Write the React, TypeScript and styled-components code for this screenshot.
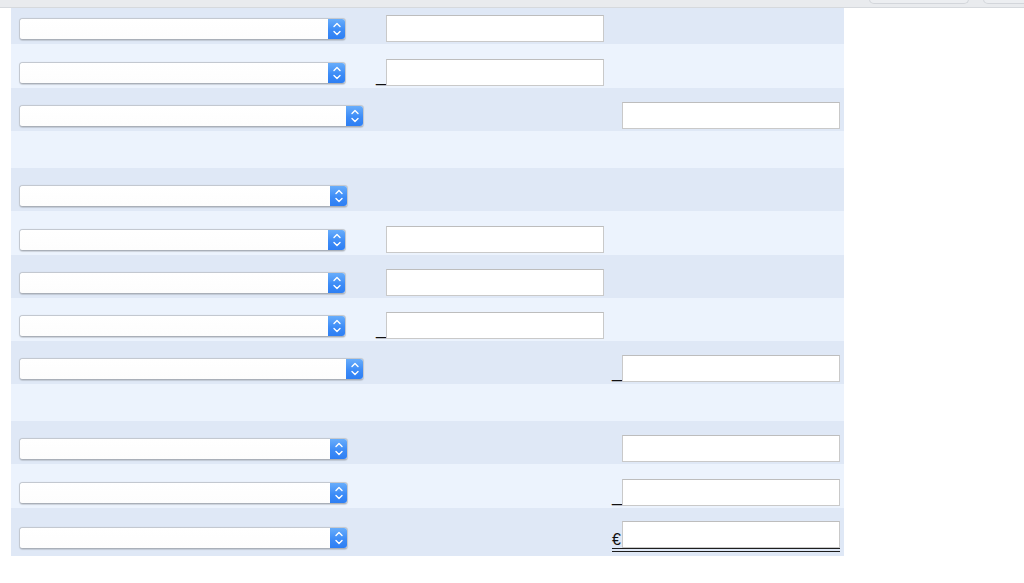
import React from "react";
import styled, { createGlobalStyle } from "styled-components";

const Global = createGlobalStyle`
  html, body { margin: 0; padding: 0; background: #ffffff; }
  body { font-family: "Liberation Sans", Arial, sans-serif; width: 1024px; height: 583px; overflow: hidden; }
`;

const Toolbar = styled.div`
  height: 7px;
  background: #e9ebee;
  border-bottom: 1px solid #d6d9dd;
  display: flex;
  gap: 14px;
  padding-left: 869px;
  overflow: hidden;
`;

const ToolButton = styled.div<{ $w: number }>`
  flex: 0 0 ${(p) => p.$w}px;
  height: 4px;
  margin-top: -1px;
  border: 1px solid #d3d6db;
  border-top: none;
  border-radius: 0 0 5px 5px;
  background: #eceef1;
`;

const Sheet = styled.div`
  margin-left: 11px;
  width: 833px;
  display: flex;
  flex-direction: column;
`;

const Row = styled.div<{ $h: number; $dark: boolean; $pb: number }>`
  height: ${(p) => p.$h}px;
  box-sizing: border-box;
  background: ${(p) => (p.$dark ? "#dfe8f6" : "#ecf3fd")};
  display: grid;
  grid-template-columns: 357px 236px 232px;
  padding-left: 8px;
  padding-bottom: ${(p) => p.$pb}px;
  align-items: end;
`;

const SelectBox = styled.div<{ $w: number; $mb: number }>`
  width: ${(p) => p.$w}px;
  height: 22px;
  box-sizing: border-box;
  margin-bottom: ${(p) => p.$mb}px;
  display: flex;
  border-radius: 4px;
  background: #ffffff;
  border: 1px solid #c3c8d0;
  border-bottom-color: #a9afb8;
  box-shadow: 0 0.5px 1px rgba(0, 0, 0, 0.14);
  overflow: hidden;
`;

const SelectField = styled.div`
  flex: 1;
  background: linear-gradient(#ffffff, #fdfdfd);
`;

const Stepper = styled.div`
  flex: 0 0 18px;
  margin: -1px -1px -1px 0;
  border-radius: 0 4px 4px 0;
  background: linear-gradient(#6cb0fb, #3d8cf7 55%, #2c7df3);
  display: flex;
  align-items: center;
  justify-content: center;
`;

const FieldCell = styled.div<{ $total?: boolean }>`
  display: flex;
  align-items: flex-end;
  width: 228px;
  ${(p) => (p.$total ? "border-bottom: 4px double #1e1e1e; padding-bottom: 0.5px;" : "")}
`;

const Mark = styled.span<{ $euro?: boolean }>`
  flex: 0 0 10px;
  width: 10px;
  height: 18px;
  line-height: 18px;
  font-size: ${(p) => (p.$euro ? "16px" : "18px")};
  color: #111;
  margin-bottom: ${(p) => (p.$euro ? -1 : 2)}px;
  overflow: visible;
  white-space: nowrap;
`;

const Input = styled.div`
  width: 218px;
  height: 27px;
  box-sizing: border-box;
  background: #ffffff;
  border: 1px solid #c9c9c9;
  border-top-color: #bdbdbd;
`;

const Chevrons = () => (
  <svg width="18" height="20" viewBox="0 0 18 20">
    <polyline
      points="6,7.5 9,4.5 12,7.5"
      fill="none"
      stroke="#ffffff"
      strokeWidth="1.4"
      strokeLinecap="round"
      strokeLinejoin="round"
    />
    <polyline
      points="6,12.5 9,15.5 12,12.5"
      fill="none"
      stroke="#ffffff"
      strokeWidth="1.4"
      strokeLinecap="round"
      strokeLinejoin="round"
    />
  </svg>
);

const Select = ({ w, mb }: { w: number; mb: number }) => (
  <SelectBox $w={w} $mb={mb}>
    <SelectField />
    <Stepper>
      <Chevrons />
    </Stepper>
  </SelectBox>
);

type Field = { mark?: "_" | "€" };

type RowData = {
  h: number;
  dark: boolean;
  select?: number;
  col2?: Field;
  col3?: Field;
  last?: boolean;
};

const rows: RowData[] = [
  { h: 36, dark: true, select: 327, col2: {} },
  { h: 44, dark: false, select: 327, col2: { mark: "_" } },
  { h: 43, dark: true, select: 345, col3: {} },
  { h: 37, dark: false },
  { h: 43, dark: true, select: 329 },
  { h: 44, dark: false, select: 327, col2: {} },
  { h: 43, dark: true, select: 327, col2: {} },
  { h: 43, dark: false, select: 327, col2: { mark: "_" } },
  { h: 43, dark: true, select: 345, col3: { mark: "_" } },
  { h: 37, dark: false },
  { h: 43, dark: true, select: 329, col3: {} },
  { h: 44, dark: false, select: 329, col3: { mark: "_" } },
  { h: 48, dark: true, select: 329, col3: { mark: "€" }, last: true },
];

const FieldView = ({ f, total }: { f?: Field; total?: boolean }) =>
  f ? (
    <FieldCell $total={total}>
      <Mark $euro={f.mark === "€"}>{f.mark ?? ""}</Mark>
      <Input />
    </FieldCell>
  ) : (
    <div />
  );

export default function App() {
  return (
    <>
      <Global />
      <Toolbar>
        <ToolButton $w={98} />
        <ToolButton $w={60} />
      </Toolbar>
      <Sheet>
        {rows.map((r, i) => (
          <Row key={i} $h={r.h} $dark={r.dark} $pb={r.last ? 4 : 2}>
            {r.select ? <Select w={r.select} mb={r.last ? 3.5 : 2.5} /> : <div />}
            <FieldView f={r.col2} />
            <FieldView f={r.col3} total={r.last} />
          </Row>
        ))}
      </Sheet>
    </>
  );
}
